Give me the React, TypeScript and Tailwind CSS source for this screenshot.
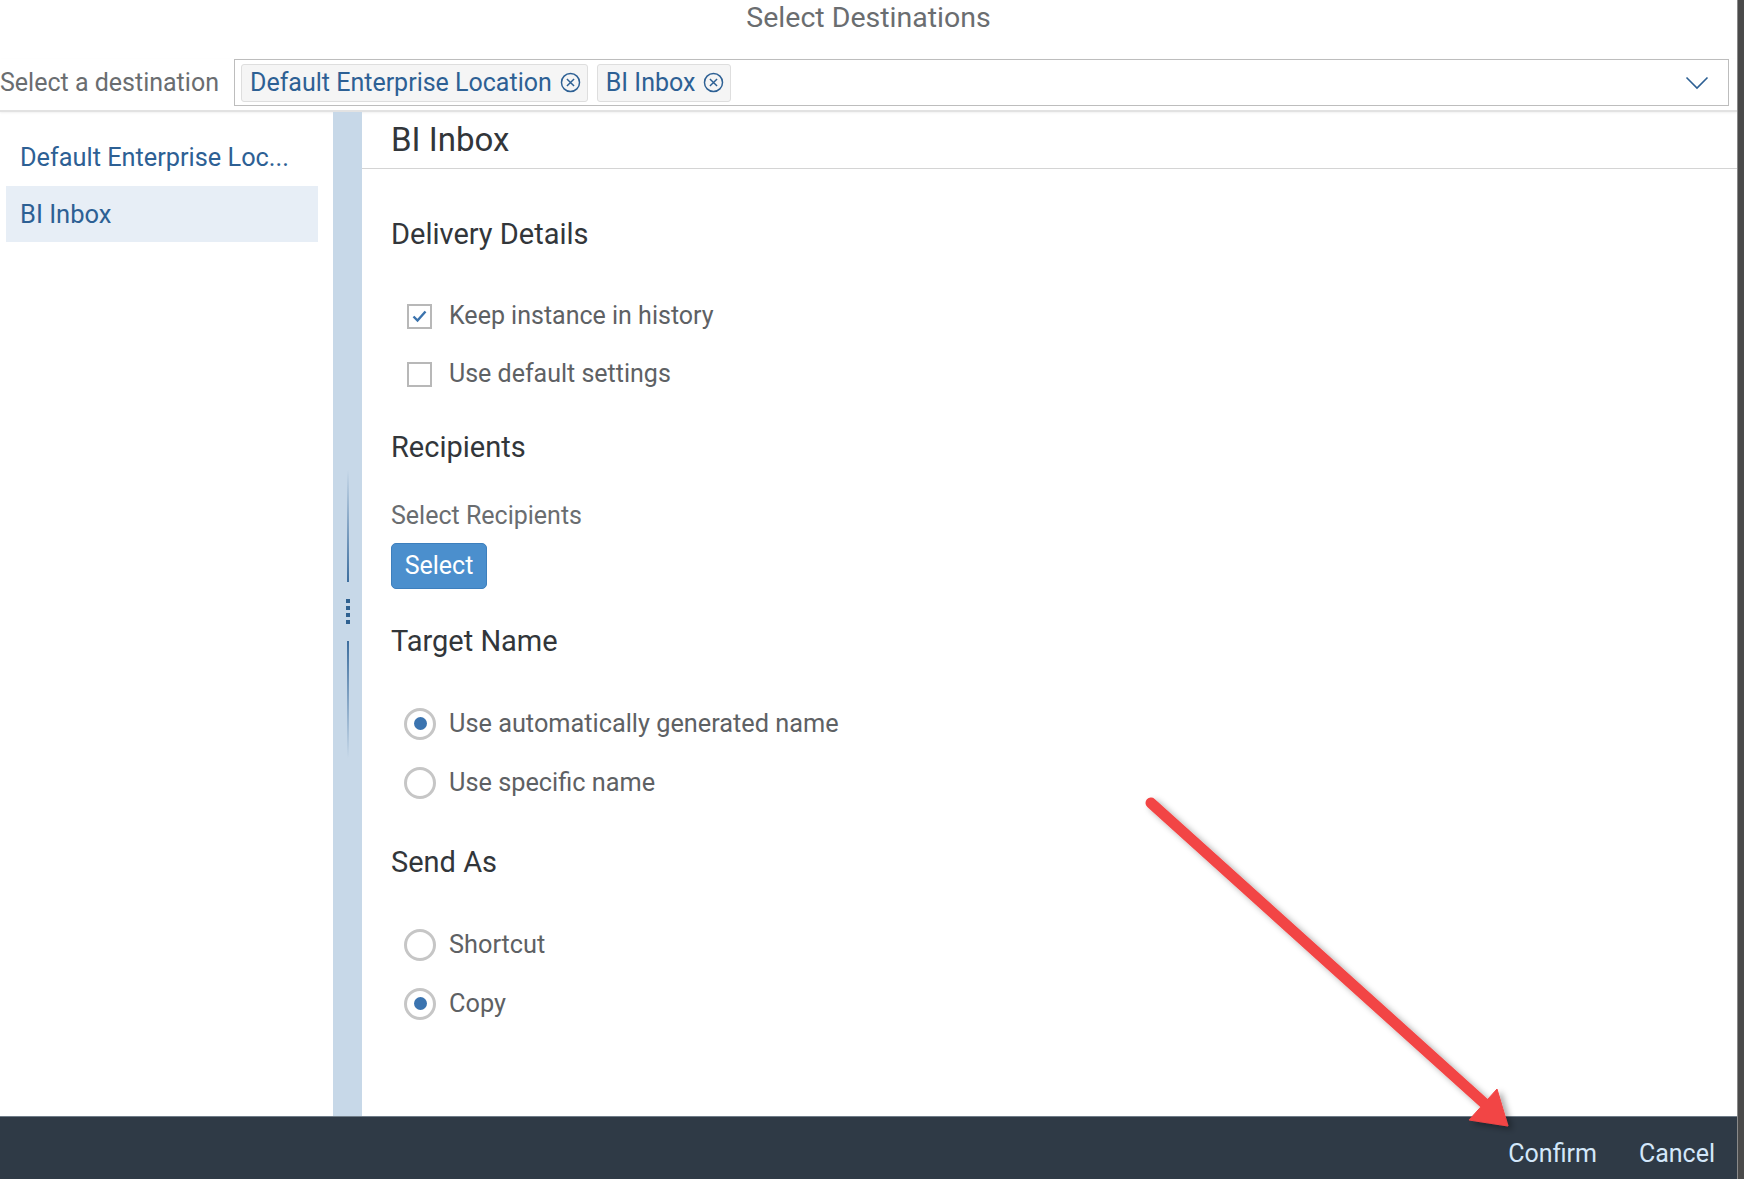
import React from "react";

const CircleX = () => (
  <svg width="21" height="21" viewBox="0 0 20 20" fill="none" stroke="#2d6094" strokeWidth="1.4">
    <circle cx="10" cy="10" r="8.6" />
    <path d="M6.6 6.6 L13.4 13.4 M13.4 6.6 L6.6 13.4" />
  </svg>
);

const Token = ({ label }: { label: string }) => (
  <div className="flex h-[38px] items-center gap-[8px] rounded-[3px] border border-[#dedede] bg-[#f5f5f5] pl-[8px] pr-[6px] text-[25px] text-[#2d6094]">
    <span className="whitespace-nowrap leading-none">{label}</span>
    <CircleX />
  </div>
);

const Checkbox = ({ checked, label }: { checked?: boolean; label: string }) => (
  <div className="flex h-[58px] items-center pl-[16px]">
    <div className="flex h-[25px] w-[25px] items-center justify-center border-2 border-[#b8b8b8] bg-white">
      {checked && (
        <svg width="15" height="13" viewBox="0 0 15 13" fill="none" stroke="#3b73ad" strokeWidth="2.4">
          <path d="M1.5 6.5 L5.5 10.5 L13.5 1.5" />
        </svg>
      )}
    </div>
    <span className="ml-[17px] text-[25px] text-[#5e6164]">{label}</span>
  </div>
);

const Radio = ({ checked, label }: { checked?: boolean; label: string }) => (
  <div className="flex h-[59px] items-center pl-[13px]">
    <div className="flex h-[32px] w-[32px] items-center justify-center rounded-full border-[3px] border-[#c6c6c6] bg-white">
      {checked && <div className="h-[13px] w-[13px] rounded-full bg-[#3b74b0]" />}
    </div>
    <span className="ml-[13px] text-[25.3px] text-[#5e6164]">{label}</span>
  </div>
);

const Heading = ({ children, className }: { children: React.ReactNode; className?: string }) => (
  <div className={"flex h-[56px] items-center text-[29px] text-[#32363a] " + (className ?? "")}>{children}</div>
);

export default function App() {
  return (
    <div className="relative flex h-[1179px] w-[1744px] overflow-hidden bg-white font-['Roboto',sans-serif]">
      <div className="flex w-[1737px] flex-col">
        {/* Title */}
        <div className="flex h-[36px] items-center justify-center text-[28.5px] text-[#6a6d70]">
          Select Destinations
        </div>

        {/* Destination picker */}
        <div className="mt-[23px] flex items-center border-b-2 border-[#e2e2e2] pb-[4px] shadow-[0_1px_2px_rgba(0,0,0,0.06)]">
          <div className="w-[234px] shrink-0 text-[25px] text-[#6a6d70]">Select a destination</div>
          <div className="mr-[8px] flex h-[47px] flex-1 items-center gap-[9px] border border-[#bdbdbd] pl-[6px] pr-[19px]">
            <Token label="Default Enterprise Location" />
            <Token label="BI Inbox" />
            <div className="flex-1" />
            <svg width="24" height="14" viewBox="0 0 24 14" fill="none" stroke="#2d6094" strokeWidth="1.6">
              <path d="M1.5 1.5 L12 12 L22.5 1.5" />
            </svg>
          </div>
        </div>

        {/* Body */}
        <div className="flex flex-1">
          {/* List */}
          <div className="w-[333px] shrink-0 pt-[18px]">
            <div className="flex h-[56px] items-center whitespace-nowrap px-[20px] text-[25.3px] text-[#2d6094]">
              Default Enterprise Loc...
            </div>
            <div className="ml-[6px] mr-[15px] flex h-[56px] items-center bg-[#e7eef6] px-[14px] text-[25.5px] text-[#2d6094]">
              BI Inbox
            </div>
          </div>

          {/* Splitter */}
          <div className="flex w-[29px] shrink-0 flex-col items-center justify-center bg-[#c7d8e8]">
            <div className="h-[112px] w-[2px] bg-gradient-to-b from-transparent to-[#3d6e9e]" />
            <div className="my-[17px] flex flex-col gap-[3px]">
              <div className="h-[4px] w-[4px] bg-[#2f6190]" />
              <div className="h-[4px] w-[4px] bg-[#2f6190]" />
              <div className="h-[4px] w-[4px] bg-[#2f6190]" />
              <div className="h-[4px] w-[4px] bg-[#2f6190]" />
            </div>
            <div className="h-[117px] w-[2px] bg-gradient-to-b from-[#3d6e9e] to-transparent" />
          </div>

          {/* Detail */}
          <div className="flex flex-1 flex-col">
            <div className="flex h-[57px] items-center border-b border-[#d4d4d4] pl-[29px] text-[33px] text-[#32363a]">
              BI Inbox
            </div>
            <div className="flex flex-col pl-[29px]">
              <Heading className="mt-[38px]">Delivery Details</Heading>
              <div className="mt-[24px]">
                <Checkbox checked label="Keep instance in history" />
                <Checkbox label="Use default settings" />
              </div>
              <Heading className="mt-[17px]">Recipients</Heading>
              <div className="mt-[20px] flex h-[40px] items-center text-[25px] text-[#6a6d70]">Select Recipients</div>
              <div className="mt-[7px]">
                <button className="flex h-[46px] w-[96px] items-center justify-center rounded-[5px] border border-[#3d7fbd] bg-[#4b8fcd] text-[25px] text-white">
                  Select
                </button>
              </div>
              <Heading className="mt-[25px]">Target Name</Heading>
              <div className="mt-[24px]">
                <Radio checked label="Use automatically generated name" />
                <Radio label="Use specific name" />
              </div>
              <Heading className="mt-[23px]">Send As</Heading>
              <div className="mt-[24px]">
                <Radio label="Shortcut" />
                <Radio checked label="Copy" />
              </div>
            </div>
          </div>
        </div>

        {/* Footer */}
        <div className="flex h-[63px] shrink-0 items-center justify-end gap-[42px] border-t border-[#6f7c88] bg-[#2f3a46] pr-[22px] pt-[11px] text-[25px] text-[#d3e7fa]">
          <span>Confirm</span>
          <span>Cancel</span>
        </div>
      </div>

      {/* Right edge strip */}
      <div className="w-[7px] border-l border-[#8a8a8a] bg-[#4a4a4a]" />

      {/* Annotation arrow */}
      <svg className="pointer-events-none absolute left-0 top-0" width="1744" height="1179">
        <defs>
          <filter id="sh" x="-10%" y="-10%" width="130%" height="130%">
            <feDropShadow dx="4" dy="3" stdDeviation="3" floodColor="#000" floodOpacity="0.35" />
          </filter>
        </defs>
        <g filter="url(#sh)" fill="#f24444" stroke="#f24444">
          <line x1="1151" y1="803" x2="1484" y2="1103" strokeWidth="11" strokeLinecap="round" />
          <polygon points="1508,1126 1469,1120 1497,1089" strokeWidth="1" strokeLinejoin="round" />
        </g>
      </svg>
    </div>
  );
}
